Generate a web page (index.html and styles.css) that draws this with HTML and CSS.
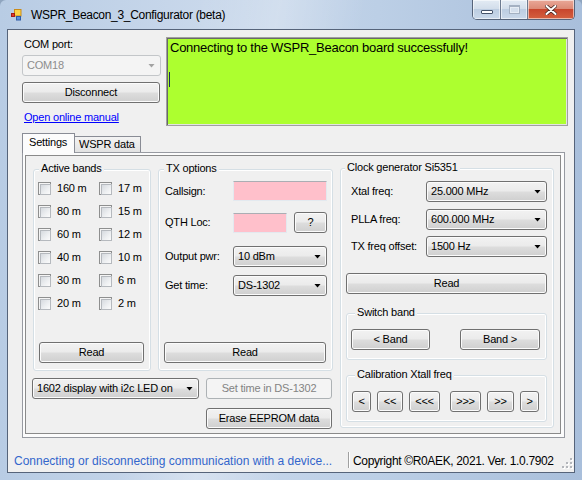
FILE: index.html
```html
<!DOCTYPE html>
<html>
<head>
<meta charset="utf-8">
<title>WSPR_Beacon_3_Configurator (beta)</title>
<link rel="stylesheet" href="styles.css">
</head>
<body>
<div class="window">
  <div class="titlebar">
    <svg class="appicon" width="11" height="12" viewBox="0 0 11 12">
      <rect x="3.5" y="0.5" width="6.5" height="6.5" fill="#fbd347" stroke="#c98b1a"/>
      <rect x="0.5" y="4.5" width="3" height="3" fill="#e2362c" stroke="#a01d16"/>
      <rect x="5.5" y="7.5" width="4" height="3.5" fill="#5a90dc" stroke="#2e5da8"/>
    </svg>
    <div class="title">WSPR_Beacon_3_Configurator (beta)</div>
    <div class="caption">
      <div class="cbtn cmin"><span class="min-ico"></span></div>
      <div class="cbtn cmax"><span class="max-ico"></span></div>
      <div class="cbtn cclose">
        <svg width="12" height="10" viewBox="0 0 12 10">
          <path d="M1.5 1 L10.5 9 M10.5 1 L1.5 9" stroke="#4a2a24" stroke-width="3.6" stroke-linecap="round"/>
          <path d="M1.5 1 L10.5 9 M10.5 1 L1.5 9" stroke="#ffffff" stroke-width="2" stroke-linecap="round"/>
        </svg>
      </div>
    </div>
  </div>

  <div class="client">
    <div class="top">
      <div class="conn">
        <div class="lbl-com">COM port:</div>
        <div class="combo disabled com">COM18</div>
        <div class="btn disc">Disconnect</div>
        <a class="link" href="#">Open online manual</a>
      </div>
      <div class="log">
        <div class="logline">Connecting to the WSPR_Beacon board successfully!</div>
        <div class="logline"></div>
        <div class="logline"><span class="caret"></span></div>
      </div>
    </div>

    <div class="tabs">
      <div class="tabstrip">
        <div class="tab active">Settings</div>
        <div class="tab inactive">WSPR data</div>
      </div>
      <div class="tabpanel">
        <div class="tabpage">
          <div class="leftcol">
            <div class="grouprow">
              <div class="group bands">
                <div class="gtitle">Active bands</div>
                <div class="bands-grid">
                  <div class="cbrow"><span class="cb"></span><span class="cbl">160 m</span></div>
                  <div class="cbrow"><span class="cb"></span><span class="cbl">17 m</span></div>
                  <div class="cbrow"><span class="cb"></span><span class="cbl">80 m</span></div>
                  <div class="cbrow"><span class="cb"></span><span class="cbl">15 m</span></div>
                  <div class="cbrow"><span class="cb"></span><span class="cbl">60 m</span></div>
                  <div class="cbrow"><span class="cb"></span><span class="cbl">12 m</span></div>
                  <div class="cbrow"><span class="cb"></span><span class="cbl">40 m</span></div>
                  <div class="cbrow"><span class="cb"></span><span class="cbl">10 m</span></div>
                  <div class="cbrow"><span class="cb"></span><span class="cbl">30 m</span></div>
                  <div class="cbrow"><span class="cb"></span><span class="cbl">6 m</span></div>
                  <div class="cbrow"><span class="cb"></span><span class="cbl">20 m</span></div>
                  <div class="cbrow"><span class="cb"></span><span class="cbl">2 m</span></div>
                </div>
                <div class="btn read-bands">Read</div>
              </div>
              <div class="group tx">
                <div class="gtitle">TX options</div>
                <div class="row r1"><span class="rlbl">Callsign:</span><span class="tb tb-call"></span></div>
                <div class="row r2"><span class="rlbl">QTH Loc:</span><span class="tb tb-qth"></span><span class="btn qbtn">?</span></div>
                <div class="row r3"><span class="rlbl">Output pwr:</span><span class="combo txc">10 dBm</span></div>
                <div class="row r4"><span class="rlbl">Get time:</span><span class="combo txc">DS-1302</span></div>
                <div class="btn read-tx">Read</div>
              </div>
            </div>
            <div class="bottomrow">
              <div class="combo lcd">1602 display with i2c LED on</div>
              <div class="actions">
                <div class="btn disabled">Set time in DS-1302</div>
                <div class="btn erase">Erase EEPROM data</div>
              </div>
            </div>
          </div>

          <div class="group clock">
            <div class="gtitle">Clock generator Si5351</div>
            <div class="crow c1"><span class="clbl">Xtal freq:</span><span class="combo cc">25.000 MHz</span></div>
            <div class="crow c2"><span class="clbl">PLLA freq:</span><span class="combo cc">600.000 MHz</span></div>
            <div class="crow c3"><span class="clbl">TX freq offset:</span><span class="combo cc">1500 Hz</span></div>
            <div class="btn read-clock">Read</div>
            <div class="group sub switch">
              <div class="gtitle">Switch band</div>
              <div class="subrow">
                <span class="btn bandprev">&lt; Band</span>
                <span class="btn bandnext">Band &gt;</span>
              </div>
            </div>
            <div class="group sub calib">
              <div class="gtitle">Calibration Xtall freq</div>
              <div class="subrow calrow">
                <span class="btn w19">&lt;</span>
                <span class="btn w26">&lt;&lt;</span>
                <span class="btn w31">&lt;&lt;&lt;</span>
                <span class="btn w31 gap10">&gt;&gt;&gt;</span>
                <span class="btn w27">&gt;&gt;</span>
                <span class="btn w19">&gt;</span>
              </div>
            </div>
          </div>
        </div>
      </div>
    </div>

    <div class="status">
      <div class="st1">Connecting or disconnecting communication with a device...</div>
      <div class="sep"></div>
      <div class="st2">Copyright ©R0AEK, 2021. Ver. 1.0.7902</div>
      <svg class="grip" width="11" height="11" viewBox="0 0 11 11">
        <g fill="#ffffff">
          <rect x="9" y="1" width="2" height="2"/>
          <rect x="5" y="5" width="2" height="2"/><rect x="9" y="5" width="2" height="2"/>
          <rect x="1" y="9" width="2" height="2"/><rect x="5" y="9" width="2" height="2"/><rect x="9" y="9" width="2" height="2"/>
        </g>
        <g fill="#b3b6bb">
          <rect x="8" y="0" width="2" height="2"/>
          <rect x="4" y="4" width="2" height="2"/><rect x="8" y="4" width="2" height="2"/>
          <rect x="0" y="8" width="2" height="2"/><rect x="4" y="8" width="2" height="2"/><rect x="8" y="8" width="2" height="2"/>
        </g>
      </svg>
    </div>
  </div>
</div>
</body>
</html>
```

FILE: styles.css
```css
* { box-sizing: border-box; }

html, body {
  margin: 0;
  padding: 0;
  background: #8fa5bf;
}

.window {
  width: 582px;
  height: 480px;
  padding-bottom: 7px;
  border-radius: 6px 6px 0 0;
  background:
    linear-gradient(100deg, rgba(255,255,255,0) 30%, rgba(255,255,255,0.25) 42%, rgba(255,255,255,0) 55%),
    linear-gradient(to right, #b8cce4 0%, #c9d8eb 35%, #bccfe6 65%, #a9bfdb 100%);
  overflow: hidden;
}

/* ---------- title bar ---------- */
.titlebar {
  height: 29px;
  display: flex;
  align-items: flex-start;
  padding-left: 11px;
}

.appicon { margin-top: 9px; flex: none; }

.title {
  margin-top: 8px;
  margin-left: 9px;
  font: 12px/15px "Liberation Sans", Arial, sans-serif;
  letter-spacing: -0.3px;
  color: #000;
}

.caption {
  margin-left: auto;
  margin-right: 7px;
  display: flex;
  height: 20px;
  border: 1px solid #56647a;
  border-top: none;
  border-radius: 0 0 5px 5px;
  overflow: hidden;
}

.cbtn {
  height: 19px;
  display: flex;
  align-items: center;
  justify-content: center;
  box-shadow: inset 0 0 0 1px rgba(255,255,255,0.55);
}

.cmin, .cmax {
  background: linear-gradient(#e3ebf4 0%, #d3deeb 45%, #bccde1 50%, #cad9ea 100%);
}

.cmin { width: 28px; border-right: 1px solid #6d7b90; align-items: flex-end; padding-bottom: 5px; }
.cmax { width: 27px; border-right: 1px solid #6d7b90; }
.cclose {
  width: 46px;
  background: linear-gradient(#e9a898 0%, #dc8b77 45%, #c8462d 50%, #d4603f 100%);
}

.min-ico {
  width: 12px;
  height: 4px;
  background: #fff;
  border: 1px solid #45536a;
  border-radius: 1px;
}

.max-ico {
  width: 11px;
  height: 9px;
  border: 1px solid #a4b1c2;
  border-top-width: 2px;
  box-shadow: inset 0 0 0 1px #e6edf5;
  background: #d4dfec;
}

/* ---------- client ---------- */
.client {
  margin: 0 7px;
  height: 444px;
  border: 1px solid #56647a;
  background: #f0f0f0;
  display: flex;
  flex-direction: column;
  font: 11px/13px "Liberation Sans", Arial, sans-serif;
  letter-spacing: -0.2px;
  color: #000;
}

.top {
  display: flex;
  padding: 7px 0 0 14px;
}

.conn { width: 139px; }

.lbl-com {
  height: 13px;
  margin-top: 1px;
  padding-left: 2px;
}

.link {
  display: block;
  margin-top: 8px;
  padding-left: 2px;
  height: 13px;
  color: #0000ff;
  text-decoration: underline;
}

.log {
  margin-left: 5px;
  width: 402px;
  height: 89px;
  background: #adff2f;
  border: 1px solid #a0a0a0;
  box-shadow: inset 1px 1px 0 #696969, inset -1px -1px 0 #e3e3e3;
  padding: 2px 0 0 3px;
  font-size: 13px;
  line-height: 16px;
  letter-spacing: -0.25px;
}

.logline { height: 16px; white-space: nowrap; }

.caret {
  display: inline-block;
  width: 1px;
  height: 15px;
  margin-left: -1px;
  vertical-align: top;
  background: #1f2a60;
}

/* ---------- buttons / combos ---------- */
.btn {
  height: 21px;
  display: flex;
  align-items: center;
  justify-content: center;
  border: 1px solid #707070;
  border-radius: 3px;
  background: linear-gradient(#f2f2f2 0%, #ebebeb 48%, #dddddd 52%, #cfcfcf 100%);
  box-shadow: inset 0 0 0 1px #fbfbfb;
  white-space: nowrap;
}

.btn.disabled {
  border-color: #adb2b5;
  background: #f4f4f4;
  box-shadow: none;
  color: #838383;
}

.combo {
  height: 21px;
  display: flex;
  align-items: center;
  padding-left: 4px;
  border: 1px solid #707070;
  border-radius: 3px;
  background: linear-gradient(#f2f2f2 0%, #ebebeb 48%, #dddddd 52%, #cfcfcf 100%);
  box-shadow: inset 0 0 0 1px #fbfbfb;
  white-space: nowrap;
}

.combo::after {
  content: "";
  width: 7px;
  height: 4px;
  margin-left: auto;
  margin-right: 5px;
  background: #000;
  clip-path: polygon(0 0, 100% 0, 50% 100%);
}

.combo.disabled {
  border-color: #c3c6c9;
  background: #f4f4f4;
  box-shadow: none;
  color: #8d8d8d;
}

.combo.disabled::after { background: #a3a3a3; }

.combo.com { margin-top: 4px; width: 139px; }
.btn.disc { margin-top: 6px; width: 138px; }

.tb {
  height: 20px;
  background: #ffc0cb;
  border: 1px solid #e3e9ef;
  border-top-color: #abadb3;
}

/* ---------- tabs ---------- */
.tabs { margin: 7px 0 0 14px; }

.tabstrip {
  display: flex;
  align-items: flex-end;
  height: 19px;
}

.tab {
  border: 1px solid #898c95;
  border-bottom: none;
  white-space: nowrap;
}

.tab.active {
  width: 53px;
  height: 20px;
  margin-bottom: -1px;
  position: relative;
  z-index: 1;
  background: #fcfcfc;
  padding: 2px 0 0 6px;
}

.tab.inactive {
  width: 67px;
  height: 16px;
  margin-left: -1px;
  background: linear-gradient(#f3f3f3, #e2e2e2);
  padding: 1px 0 0 4px;
}

.tabpanel {
  width: 543px;
  height: 286px;
  border: 1px solid #979aa1;
  background: #fcfcfc;
  padding: 2px 3px 3px 2px;
}

.tabpage {
  height: 100%;
  border: 1px solid #8a8a8a;
  background: #f0f0f0;
  display: flex;
  align-items: flex-start;
  padding: 13px 0 0 6px;
}

/* ---------- group boxes ---------- */
.group {
  border: 1px solid #d5dfe5;
  border-radius: 3px;
  box-shadow: inset 0 0 0 1px #ffffff;
}

.gtitle {
  display: table;
  height: 13px;
  margin: -8px 0 0 5px;
  padding: 0 2px;
  background: #f0f0f0;
  white-space: nowrap;
}

.leftcol { width: 301px; }

.grouprow {
  display: flex;
  gap: 7px;
  margin-left: 1px;
}

.bands { width: 118px; height: 202px; }
.tx { width: 175px; height: 202px; }

.bands-grid {
  display: grid;
  grid-template-columns: 61px 50px;
  row-gap: 10px;
  margin: 7px 0 0 4px;
}

.cbrow {
  display: flex;
  align-items: center;
  height: 13px;
  white-space: nowrap;
}

.cb {
  width: 13px;
  height: 13px;
  flex: none;
  border: 1px solid #8e8f8f;
  background: #f4f4f4;
  padding: 1px;
}

.cb::after {
  content: "";
  display: block;
  width: 100%;
  height: 100%;
  border: 1px solid #b5b9be;
  background: linear-gradient(135deg, #d6dadf 0%, #eef0f2 60%, #fbfbfb 100%);
}

.cbl { margin-left: 6px; }

.read-bands { margin: 32px 0 0 5px; width: 105px; }

.row {
  display: flex;
  align-items: center;
  margin-left: 6px;
  white-space: nowrap;
}

.rlbl { width: 68px; flex: none; }

.r1 { margin-top: 6px; height: 20px; }
.r2 { margin-top: 11px; height: 21px; }
.r3 { margin-top: 13px; height: 21px; }
.r4 { margin-top: 8px; height: 21px; }

.tb-call { width: 94px; }
.tb-qth { width: 54px; }
.qbtn { width: 33px; margin-left: 7px; }
.txc { width: 94px; }

.read-tx { margin: 46px 0 0 5px; width: 162px; }

.bottomrow {
  display: flex;
  margin-top: 7px;
}

.combo.lcd { width: 167px; }

.actions {
  width: 126px;
  margin-left: 7px;
}

.btn.erase { margin-top: 9px; }

/* clock */
.clock {
  width: 214px;
  height: 260px;
  margin: -1px 0 0 7px;
}

.clock > .gtitle { margin-left: 4px; }

.crow {
  display: flex;
  align-items: center;
  height: 21px;
  margin-left: 10px;
  white-space: nowrap;
}

.clbl { width: 75px; flex: none; }
.cc { width: 121px; }

.c1 { margin-top: 7px; }
.c2 { margin-top: 7px; }
.c3 { margin-top: 6px; }

.read-clock { margin: 16px 0 0 5px; width: 201px; }

.sub { width: 201px; height: 47px; margin-left: 5px; }
.sub > .gtitle { margin-left: 8px; }
.switch { margin-top: 19px; }
.calib { margin-top: 15px; }

.subrow {
  display: flex;
  margin-top: 10px;
}

.bandprev { width: 79px; margin-left: 4px; }
.bandnext { width: 80px; margin-left: 30px; }

.calrow { gap: 6px; margin-left: 5px; }
.w19 { width: 19px; }
.w26 { width: 26px; }
.w27 { width: 27px; }
.w31 { width: 31px; }
.gap10 { margin-left: 4px; }

/* ---------- status bar ---------- */
.status {
  margin-top: auto;
  height: 22px;
  display: flex;
  align-items: center;
  font-size: 12px;
  line-height: 15px;
  letter-spacing: 0;
  white-space: nowrap;
}

.st1 {
  width: 340px;
  padding-left: 6px;
  color: #3366cc;
}

.sep {
  width: 2px;
  height: 16px;
  border-left: 1px solid #a0a0a0;
  border-right: 1px solid #ffffff;
  margin-top: -2px;
}

.st2 {
  padding-left: 3px;
  letter-spacing: -0.35px;
}

.grip {
  margin-left: auto;
  margin-right: 1px;
  align-self: flex-end;
  margin-bottom: 3px;
}
```
